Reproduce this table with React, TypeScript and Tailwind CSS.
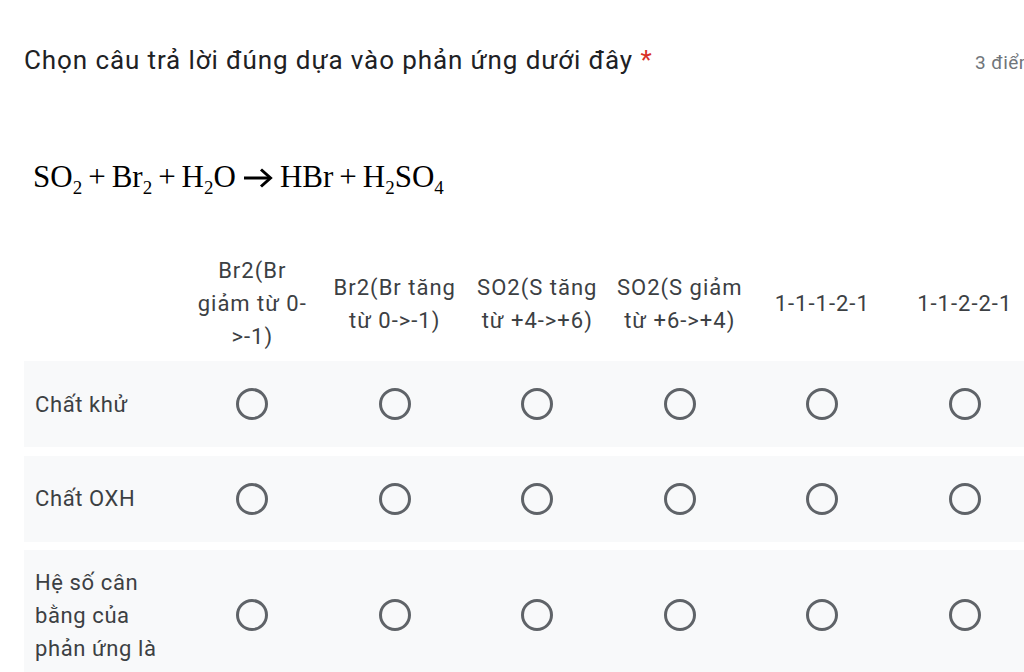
const columns = [
  { text: "Br2(Br giảm từ 0->-1)", pad: "px-[14px]" },
  { text: "Br2(Br tăng từ 0->-1)", pad: "px-[5px]" },
  { text: "SO2(S tăng từ +4->+6)", pad: "px-[5px]" },
  { text: "SO2(S giảm từ +6->+4)", pad: "px-[5px]" },
  { text: "1-1-1-2-1", pad: "px-[5px]" },
  { text: "1-1-2-2-1", pad: "px-[5px]" },
];

const rows = [
  { label: "Chất khử", height: "h-[86px]" },
  { label: "Chất OXH", height: "h-[86px]" },
  { label: "Hệ số cân bằng của phản ứng là", height: "h-[130px]" },
];

function Radio() {
  return <div className="w-[32px] h-[32px] rounded-full border-[3px] border-[#5f6368]" />;
}

function Sub({ children }: { children: string }) {
  return <sub className="text-[19px] relative top-[7px]">{children}</sub>;
}

function Plus() {
  return <span className="mx-[6px]">+</span>;
}

export default function App() {
  return (
    <div className="w-[1024px] h-[672px] overflow-hidden bg-white font-['Roboto',sans-serif]">
      <div className="w-[1036px] flex items-baseline pl-[24px] pt-[42px]">
        <h1 className="text-[26px] leading-[36px] text-[#202124] tracking-[0.9px]">
          Chọn câu trả lời đúng dựa vào phản ứng dưới đây <span className="text-[#d93025]">*</span>
        </h1>
        <span className="ml-auto text-[19px] text-[#70757a] tracking-[0.5px] whitespace-nowrap">3 điểm</span>
      </div>

      <div className="flex items-center pl-[33px] pt-[81px] font-['Liberation_Serif',serif] text-[31px] leading-[36px] text-black whitespace-nowrap">
        <span>
          SO<Sub>2</Sub>
          <Plus />
          Br<Sub>2</Sub>
          <Plus />
          H<Sub>2</Sub>O
        </span>
        <svg className="mx-[7px] mt-[2px]" width="30" height="22" viewBox="0 0 30 22" fill="none" stroke="black" strokeWidth="3">
          <line x1="1" y1="11" x2="27" y2="11" />
          <polyline points="18,2.5 27.5,11 18,19.5" />
        </svg>
        <span>
          HBr
          <Plus />H<Sub>2</Sub>SO<Sub>4</Sub>
        </span>
      </div>

      <div className="pl-[24px] pt-[51px] w-[1060px]">
        <div className="grid grid-cols-[157px_repeat(6,142.5px)] h-[115px] items-center">
          <div />
          {columns.map((c) => (
            <div key={c.text} className={`${c.pad} text-center text-[22px] tracking-[1px] leading-[33px] text-[#3c4043]`}>
              {c.text}
            </div>
          ))}
        </div>
        <div className="flex flex-col gap-[8.5px]">
          {rows.map((r) => (
            <div
              key={r.label}
              className={`grid grid-cols-[157px_repeat(6,142.5px)] items-center bg-[#f8f9fa] ${r.height}`}
            >
              <div className="pl-[11px] pr-[20px] text-[22px] tracking-[0.6px] leading-[33px] text-[#3c4043]">{r.label}</div>
              {columns.map((c) => (
                <div key={c.text} className="flex justify-center">
                  <Radio />
                </div>
              ))}
            </div>
          ))}
        </div>
      </div>
    </div>
  );
}
